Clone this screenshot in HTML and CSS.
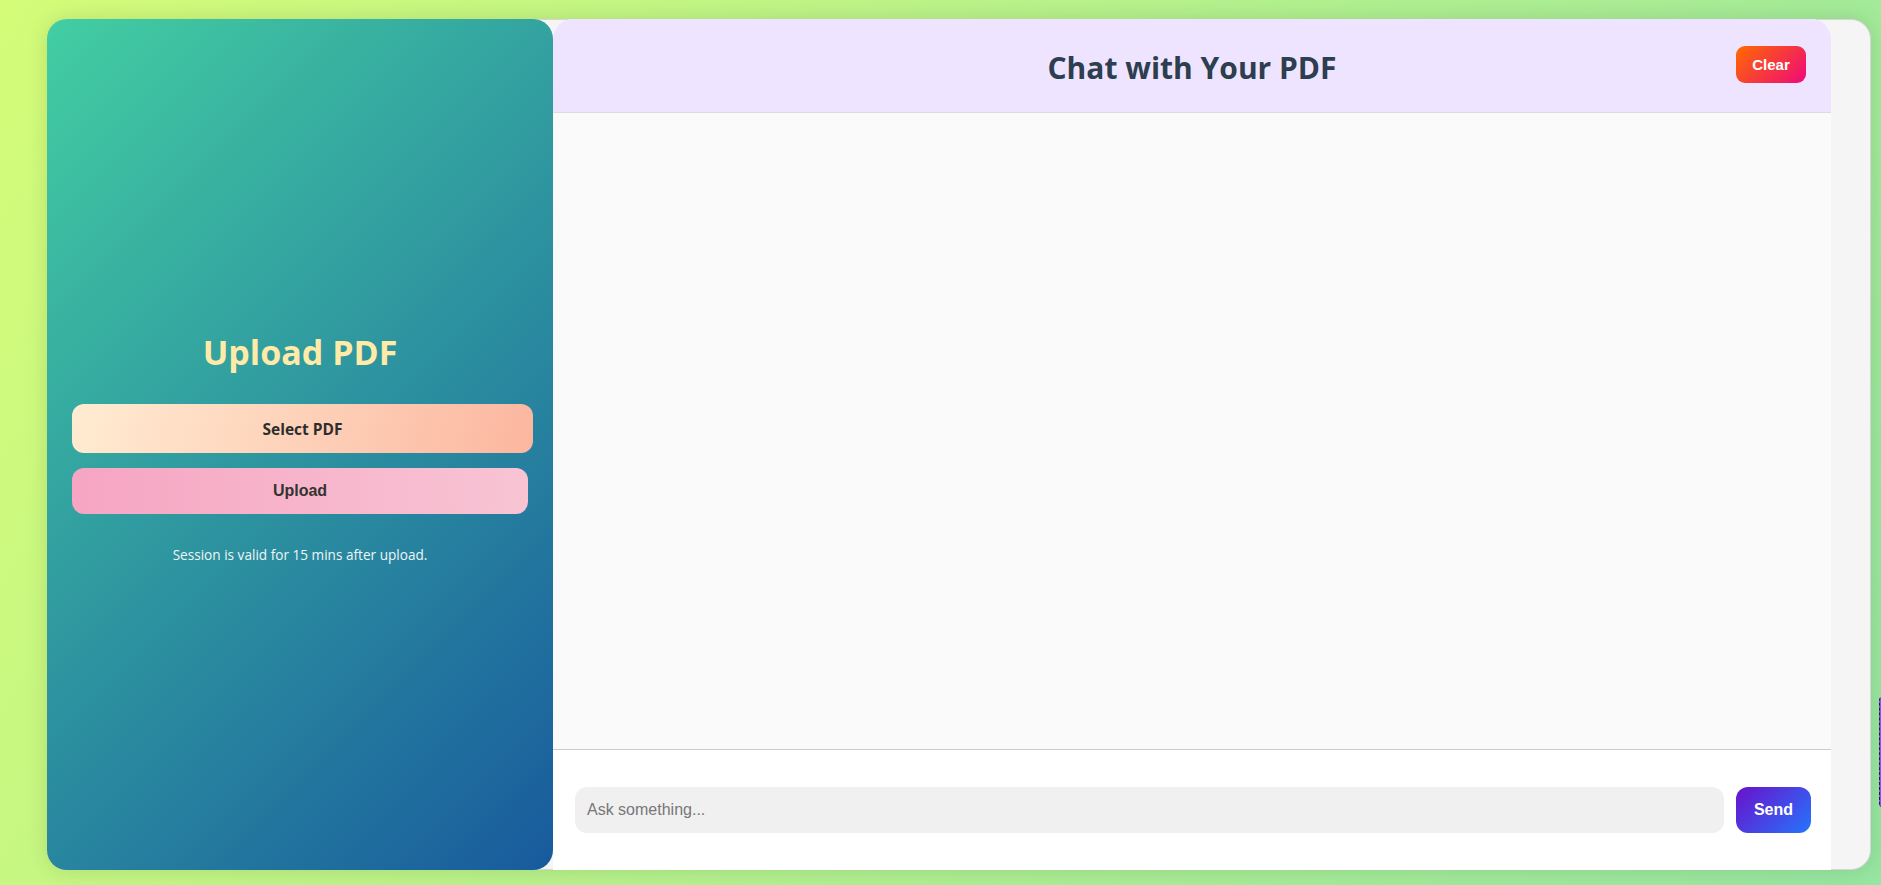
FILE: index.html
```html
<!DOCTYPE html>
<html lang="en">
<head>
<meta charset="utf-8">
<title>Chat with Your PDF</title>
<link rel="stylesheet" href="styles.css">
</head>
<body>
  <div class="app">
    <aside class="sidebar">
      <h1 class="sidebar-title">Upload PDF</h1>
      <label class="select-btn">Select PDF</label>
      <button class="upload-btn">Upload</button>
      <p class="session-note">Session is valid for 15 mins after upload.</p>
    </aside>
    <main class="chat">
      <header class="chat-header">
        <h2 class="chat-title">Chat with Your PDF</h2>
        <button class="clear-btn">Clear</button>
      </header>
      <section class="messages"></section>
      <div class="composer">
        <input class="ask-input" type="text" placeholder="Ask something...">
        <button class="send-btn">Send</button>
      </div>
    </main>
  </div>
  <div class="edge-widget"></div>
</body>
</html>
```
FILE: styles.css
```css
* { box-sizing: border-box; }

html, body { height: 100%; }

body {
  margin: 0;
  padding: 19px 10px 14px 47px;
  background: linear-gradient(120deg, #d4fc79 0%, #96e6a1 100%);
  font-family: "Open Sans", "Noto Sans", sans-serif;
  overflow: hidden;
}

.app {
  display: flex;
  width: 1824px;
  height: 851px;
  background: #f5f5f5;
  border: 1px solid #d6d6d6;
  border-radius: 20px;
  box-shadow: 0 0 22px rgba(0, 0, 0, 0.12);
}

.sidebar {
  width: 506px;
  flex: none;
  margin: -1px 0 -1px -1px;
  border-radius: 20px;
  background: linear-gradient(135deg, #43cea2, #185a9d);
  display: flex;
  flex-direction: column;
  justify-content: center;
  padding: 3px 25px 0;
}

.sidebar-title {
  margin: 0 0 29px;
  text-align: center;
  font-size: 34px;
  font-weight: 700;
  color: #ffeaa7;
  line-height: 46px;
}

.select-btn {
  display: block;
  width: 461px;
  height: 49px;
  line-height: 50px;
  text-align: center;
  border-radius: 12px;
  background: linear-gradient(110deg, #ffecd2 0%, #fcb69f 100%);
  color: #2d2d2d;
  font-weight: 700;
  font-size: 15.5px;
}

.upload-btn {
  margin-top: 15px;
  width: 456px;
  height: 46px;
  border: none;
  border-radius: 12px;
  background: linear-gradient(90deg, #f6a5c2 0%, #f8c4d4 100%);
  color: #333;
  font-family: "Liberation Sans", Arial, sans-serif;
  font-weight: 700;
  font-size: 16px;
}

.session-note {
  margin: 32px 0 0;
  text-align: center;
  color: #eef6f6;
  font-size: 13.6px;
  line-height: 18px;
}

.chat {
  width: 1278px;
  flex: none;
  display: flex;
  flex-direction: column;
  margin-top: -1px;
  margin-bottom: -1px;
  background: #fff;
  border-radius: 20px 20px 0 0;
  overflow: hidden;
}

.chat-header {
  height: 94px;
  flex: none;
  display: flex;
  align-items: center;
  padding: 0 25px 0 95px;
  background: #efe4ff;
  border-bottom: 1px solid #dcdcdc;
}

.chat-title {
  flex: 1;
  margin: 0;
  text-align: center;
  font-size: 30px;
  font-weight: 700;
  color: #2c3e50;
  line-height: 40px;
  padding-top: 4px;
}

.clear-btn {
  width: 70px;
  height: 37px;
  border: none;
  border-radius: 9px;
  background: linear-gradient(135deg, #ff6a00 0%, #ee0979 100%);
  color: #fff;
  font-family: "Liberation Sans", Arial, sans-serif;
  font-weight: 700;
  font-size: 15px;
  padding: 0;
  margin-top: -2px;
}

.messages {
  flex: 1;
  background: #fafafa;
  border-bottom: 1px solid #cccccc;
}

.composer {
  height: 120px;
  flex: none;
  display: flex;
  align-items: center;
  gap: 12px;
  padding: 0 20px 0 22px;
  background: #fff;
}

.ask-input {
  flex: 1;
  height: 46px;
  border: none;
  outline: none;
  border-radius: 12px;
  background: #f0f0f0;
  padding: 0 12px;
  font-family: "Liberation Sans", Arial, sans-serif;
  font-size: 16px;
  color: #333;
}

.ask-input::placeholder { color: #777; }

.send-btn {
  width: 75px;
  height: 46px;
  border: none;
  border-radius: 12px;
  background: linear-gradient(135deg, #6a11cb 0%, #2575fc 100%);
  color: #fff;
  font-family: "Liberation Sans", Arial, sans-serif;
  font-weight: 700;
  font-size: 16px;
  padding: 0;
}

.edge-widget {
  position: absolute;
  left: 1879px;
  top: 697px;
  width: 12px;
  height: 110px;
  border: 1px dashed #222;
  border-radius: 3px;
  background: #8a4dff;
}
```
